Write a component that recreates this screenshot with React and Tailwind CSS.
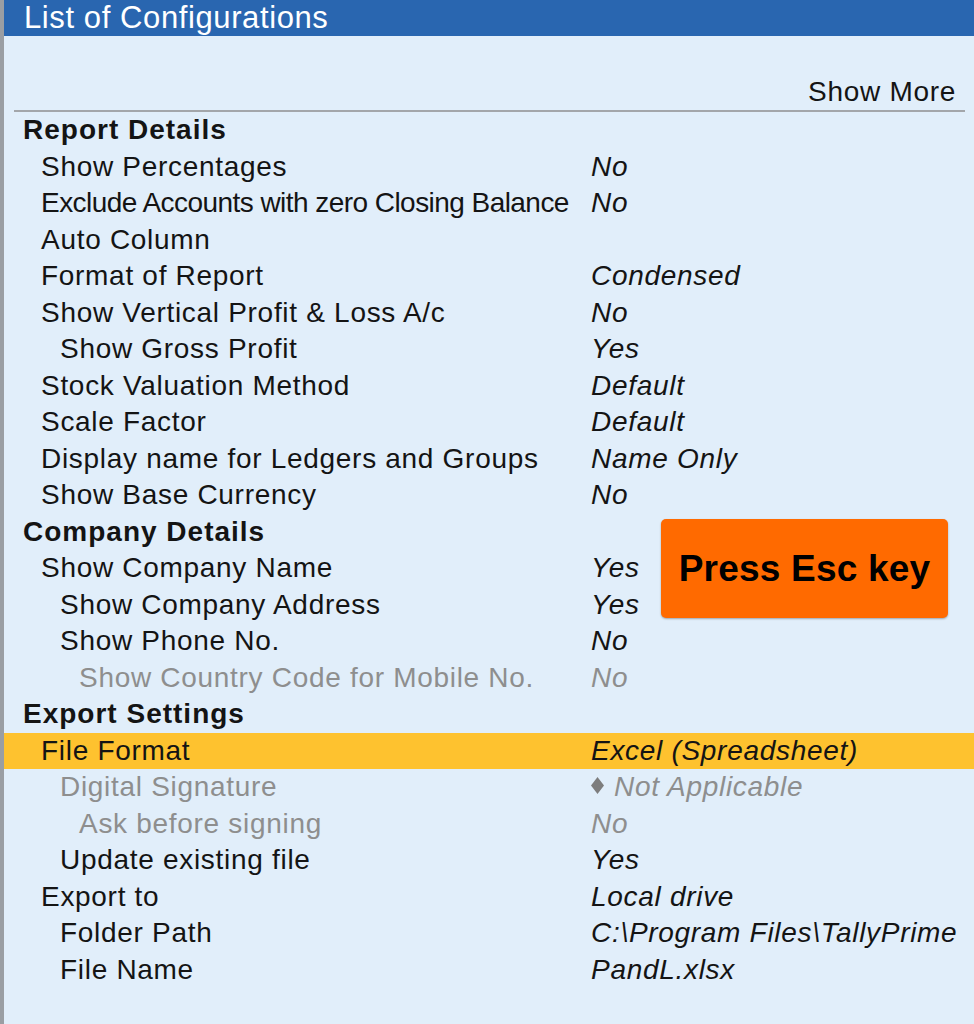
import React from 'react'

const rows = [
  { label: 'Report Details', heading: true },
  { label: 'Show Percentages', value: 'No', level: 1 },
  { label: 'Exclude Accounts with zero Closing Balance', value: 'No', level: 1, squeeze: true },
  { label: 'Auto Column', level: 1 },
  { label: 'Format of Report', value: 'Condensed', level: 1 },
  { label: 'Show Vertical Profit & Loss A/c', value: 'No', level: 1 },
  { label: 'Show Gross Profit', value: 'Yes', level: 2 },
  { label: 'Stock Valuation Method', value: 'Default', level: 1 },
  { label: 'Scale Factor', value: 'Default', level: 1 },
  { label: 'Display name for Ledgers and Groups', value: 'Name Only', level: 1 },
  { label: 'Show Base Currency', value: 'No', level: 1 },
  { label: 'Company Details', heading: true },
  { label: 'Show Company Name', value: 'Yes', level: 1 },
  { label: 'Show Company Address', value: 'Yes', level: 2 },
  { label: 'Show Phone No.', value: 'No', level: 2 },
  { label: 'Show Country Code for Mobile No.', value: 'No', level: 3, muted: true },
  { label: 'Export Settings', heading: true },
  { label: 'File Format', value: 'Excel (Spreadsheet)', level: 1, active: true },
  { label: 'Digital Signature', value: 'Not Applicable', level: 2, muted: true, diamond: true },
  { label: 'Ask before signing', value: 'No', level: 3, muted: true },
  { label: 'Update existing file', value: 'Yes', level: 2 },
  { label: 'Export to', value: 'Local drive', level: 1 },
  { label: 'Folder Path', value: 'C:\\Program Files\\TallyPrime', level: 2 },
  { label: 'File Name', value: 'PandL.xlsx', level: 2 },
]

const indent = {
  0: 'pl-[19px]',
  1: 'pl-[37px]',
  2: 'pl-[56px]',
  3: 'pl-[75px]',
}

function Diamond() {
  return (
    <svg width="13" height="17" viewBox="0 0 13 17" className="mb-[4px] shrink-0">
      <polygon points="6.5,0 13,8.5 6.5,17 0,8.5" fill="#7d7d7d" />
    </svg>
  )
}

function ConfigRow({ row }) {
  const tone = row.muted ? 'text-[#8e8e8e]' : 'text-[#141414]'

  if (row.heading) {
    return (
      <div className="flex h-[36.5px] items-center pl-[19px] font-bold tracking-[1px] text-[#141414]">
        {row.label}
      </div>
    )
  }

  return (
    <div className={`flex h-[36.5px] items-center ${row.active ? 'bg-[#fec22f]' : ''} ${tone}`}>
      <div
        className={`w-[587px] shrink-0 whitespace-nowrap ${indent[row.level]} ${row.squeeze ? 'tracking-[-0.55px]' : ''}`}
      >
        {row.label}
      </div>
      <div className="flex items-center gap-[10px] whitespace-nowrap italic">
        {row.diamond && <Diamond />}
        {row.value}
      </div>
    </div>
  )
}

export default function App() {
  return (
    <div
      className="relative flex h-[1024px] w-[974px] bg-[#e1eefa] text-[28px] tracking-[0.7px]"
      style={{ fontFamily: '"Liberation Sans", Arial, sans-serif' }}
    >
      <div className="w-[4px] shrink-0 bg-[#9a9ea3]" />

      <div className="flex min-w-0 flex-1 flex-col">
        <div className="flex h-[36px] items-center bg-[#2966b0] pl-[20px] text-[31px] tracking-[0.6px] text-white">
          List of Configurations
        </div>

        <div className="flex h-[74px] items-end justify-end pr-[18px]">
          <span className="leading-[36px] text-[#141414]">Show More</span>
        </div>
        <div className="ml-[10px] mr-[9px] h-[2px] bg-[#a3a6aa]" />

        <div className="flex flex-col">
          {rows.map((row) => (
            <ConfigRow key={row.label} row={row} />
          ))}
        </div>
      </div>

      <div className="absolute left-[661px] top-[519px] flex h-[99px] w-[287px] items-center justify-center rounded-[5px] bg-[#ff6a00] text-[37px] font-bold tracking-[0.2px] text-black shadow-[0_1px_2px_rgba(0,0,0,0.3)]">
        Press Esc key
      </div>
    </div>
  )
}
